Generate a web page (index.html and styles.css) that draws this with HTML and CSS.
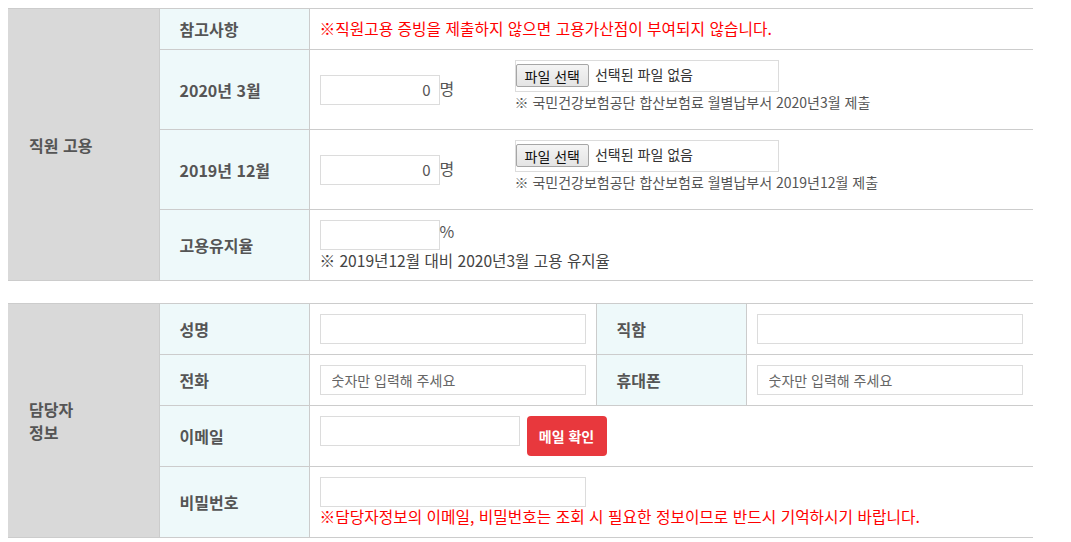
FILE: index.html
```html
<!DOCTYPE html>
<html lang="ko">
<head>
    <meta charset="UTF-8">
    <meta name="viewport" content="width=device-width, initial-scale=1.0">
    <title>직원 고용 / 담당자 정보</title>
    <link rel="stylesheet" href="styles.css">
</head>
<body>

<table class="form-table">
    <colgroup>
        <col class="col-group">
        <col class="col-label">
        <col>
    </colgroup>
    <tr>
        <th rowspan="4" class="group">직원 고용</th>
        <th class="label">참고사항</th>
        <td class="notice">※직원고용 증빙을 제출하지 않으면 고용가산점이 부여되지 않습니다.</td>
    </tr>
    <tr>
        <th class="label">2020년 3월</th>
        <td>
            <div class="count-row">
                <div class="count">
                    <input type="text" class="input-num" value="0"><span class="unit">명</span>
                </div>
                <div class="upload">
                    <div class="file-box">
                        <button type="button" class="file-btn">파일 선택</button>
                        <span class="file-name">선택된 파일 없음</span>
                    </div>
                    <p class="hint">※ 국민건강보험공단 합산보험료 월별납부서 2020년3월 제출</p>
                </div>
            </div>
        </td>
    </tr>
    <tr>
        <th class="label">2019년 12월</th>
        <td>
            <div class="count-row">
                <div class="count">
                    <input type="text" class="input-num" value="0"><span class="unit">명</span>
                </div>
                <div class="upload">
                    <div class="file-box">
                        <button type="button" class="file-btn">파일 선택</button>
                        <span class="file-name">선택된 파일 없음</span>
                    </div>
                    <p class="hint">※ 국민건강보험공단 합산보험료 월별납부서 2019년12월 제출</p>
                </div>
            </div>
        </td>
    </tr>
    <tr>
        <th class="label">고용유지율</th>
        <td>
            <input type="text" class="input-num"><span class="unit unit-pct">%</span>
            <p class="hint hint-dark">※ 2019년12월 대비 2020년3월 고용 유지율</p>
        </td>
    </tr>
</table>

<table class="form-table contact-table">
    <colgroup>
        <col class="col-group">
        <col class="col-label">
        <col class="col-field">
        <col class="col-label">
        <col class="col-field">
    </colgroup>
    <tr>
        <th rowspan="4" class="group group-2line">담당자<br>정보</th>
        <th class="label">성명</th>
        <td><input type="text" class="input-text"></td>
        <th class="label">직함</th>
        <td><input type="text" class="input-text"></td>
    </tr>
    <tr>
        <th class="label">전화</th>
        <td><input type="text" class="input-text" placeholder="숫자만 입력해 주세요"></td>
        <th class="label">휴대폰</th>
        <td><input type="text" class="input-text" placeholder="숫자만 입력해 주세요"></td>
    </tr>
    <tr>
        <th class="label">이메일</th>
        <td colspan="3">
            <div class="email-row">
                <input type="text" class="input-email">
                <button type="button" class="btn-red">메일 확인</button>
            </div>
        </td>
    </tr>
    <tr>
        <th class="label">비밀번호</th>
        <td colspan="3">
            <input type="password" class="input-text">
            <p class="notice">※담당자정보의 이메일, 비밀번호는 조회 시 필요한 정보이므로 반드시 기억하시기 바랍니다.</p>
        </td>
    </tr>
</table>

</body>
</html>
```

FILE: styles.css
```css
body {
    margin: 8px;
    font-family: "Noto Sans CJK KR", "Noto Sans", sans-serif;
    color: #444;
    background-color: #fff;
}

.form-table {
    width: 1025px;
    table-layout: fixed;
    border-collapse: collapse;
    border-top: 1px solid #ccc;
    border-bottom: 1px solid #ccc;
}

.contact-table {
    margin-top: 22px;
}

.col-group {
    width: 151px;
}

.col-label {
    width: 150px;
}

.col-field {
    width: 287px;
}

.form-table th,
.form-table td {
    border: 1px solid #ccc;
    padding: 10px;
    font-size: 16px;
    line-height: 20px;
    text-align: left;
    vertical-align: middle;
}

.form-table th.group {
    border-left: none;
    background-color: #d9d9d9;
    color: #555;
    font-weight: bold;
    padding-left: 21px;
}

.form-table th.group-2line {
    line-height: 23px;
}

.form-table th.label {
    background-color: #eef9fa;
    color: #555;
    font-weight: bold;
    padding-left: 20px;
}

.form-table td {
    border-right: none;
}

.notice,
.form-table td.notice {
    margin: 0;
    color: #ff0000;
    font-size: 15.75px;
    line-height: 20px;
}

/* count + upload rows */
.count-row {
    display: flex;
}

.count {
    width: 195px;
    align-self: center;
}

.upload {
    padding-bottom: 7px;
}

.input-num {
    width: 120px;
    height: 30px;
    box-sizing: border-box;
    border: 1px solid #dcdcdc;
    padding: 0 8px;
    text-align: right;
    font-family: inherit;
    font-size: 15px;
    color: #555;
    outline: none;
}

.unit {
    font-size: 16px;
    color: #555;
    vertical-align: 2px;
}

.unit-pct {
    vertical-align: 4px;
}

.file-box {
    width: 264px;
    height: 32px;
    box-sizing: border-box;
    border: 1px solid #dcdcdc;
    padding: 3px 0 0 0;
    display: flex;
    align-items: flex-start;
    gap: 6px;
}

.file-btn {
    height: 23px;
    padding: 0 8px;
    border: 1px solid #a6a6a6;
    border-radius: 2px;
    background: linear-gradient(#f4f4f4, #e4e4e4);
    font-family: inherit;
    font-size: 14px;
    line-height: 20px;
    color: #111;
}

.file-name {
    font-size: 14px;
    line-height: 20px;
    color: #333;
}

.hint {
    margin: 0;
    font-size: 14px;
    line-height: 20px;
    color: #555;
}

.hint-dark {
    font-size: 15.6px;
    color: #444;
}

/* contact inputs */
.input-text,
.input-email {
    display: block;
    width: 100%;
    height: 30px;
    box-sizing: border-box;
    border: 1px solid #dcdcdc;
    padding: 0 11px;
    font-family: inherit;
    font-size: 14px;
    color: #555;
    outline: none;
}

.input-text::placeholder {
    color: #666;
}

.contact-table td[colspan] .input-text {
    width: 266px;
}

.email-row {
    display: flex;
    align-items: flex-start;
    gap: 7px;
}

.input-email {
    width: 200px;
}

.btn-red {
    width: 80px;
    height: 40px;
    border: none;
    border-radius: 4px;
    background-color: #e8383d;
    color: #fff;
    font-family: inherit;
    font-size: 14px;
    font-weight: bold;
    cursor: pointer;
}
```
